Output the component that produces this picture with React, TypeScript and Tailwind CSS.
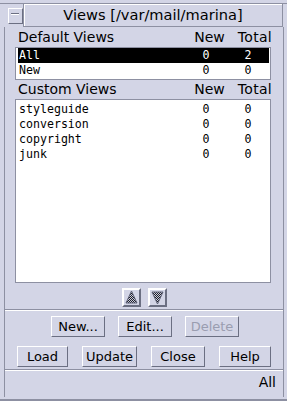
import React from 'react';

interface ViewRow {
  name: string;
  unread: number;
  total: number;
}

const defaultViews: ViewRow[] = [
  { name: 'All', unread: 0, total: 2 },
  { name: 'New', unread: 0, total: 0 },
];

const customViews: ViewRow[] = [
  { name: 'styleguide', unread: 0, total: 0 },
  { name: 'conversion', unread: 0, total: 0 },
  { name: 'copyright', unread: 0, total: 0 },
  { name: 'junk', unread: 0, total: 0 },
];

const raised = 'border border-t-white border-l-white border-r-[#6b6f82] border-b-[#6b6f82]';

const ListRow: React.FC<{ row: ViewRow; selected?: boolean }> = ({ row, selected }) => (
  <div
    className={`flex h-[15px] items-center pl-[1px] pr-[11px] leading-[15px] ${
      selected ? 'bg-black text-white' : 'text-black'
    }`}
  >
    <span className="flex-1">{row.name}</span>
    <span className="w-[20px] text-center">{row.unread}</span>
    <span className="ml-[22px] w-[20px] text-center">{row.total}</span>
  </div>
);

const SectionHeader: React.FC<{ title: string; className: string }> = ({ title, className }) => (
  <div className={`flex pl-[13px] pr-[11px] text-[14px] leading-[16px] text-black ${className}`}>
    <span className="flex-1">{title}</span>
    <span>New</span>
    <span className="ml-[13px] tracking-[0.3px]">Total</span>
  </div>
);

const Separator = () => <div className="h-[2px] border-t border-t-[#8d90a2] border-b border-b-white" />;

const Button: React.FC<{ label: string; width: string; disabled?: boolean }> = ({ label, width, disabled }) => (
  <div
    className={`${raised} ${width} flex h-[21px] items-center justify-center text-[13px] leading-[15px] ${
      disabled ? 'text-[#9a9db0]' : 'text-black'
    }`}
  >
    {label}
  </div>
);

const Arrow: React.FC<{ up?: boolean; id: string }> = ({ up, id }) => (
  <div className={`${raised} border-2 flex h-[19px] w-[19px] items-center justify-center`}>
    <svg width="15" height="15" viewBox="0 0 15 15">
      <defs>
        <pattern id={id} width="2" height="2" patternUnits="userSpaceOnUse">
          <rect width="2" height="2" fill="#c9cbdc" />
          <rect width="1" height="1" fill="#1c1d26" />
          <rect x="1" y="1" width="1" height="1" fill="#1c1d26" />
        </pattern>
      </defs>
      <polygon
        points={up ? '7.5,1 2,13 13,13' : '2,2 13,2 7.5,14'}
        fill={`url(#${id})`}
        stroke="#5f6378"
        strokeWidth="1"
      />
    </svg>
  </div>
);

export default function App() {
  return (
    <div className="flex h-[401px] w-[287px] flex-col bg-[#d3d5e6] pt-[3px] font-['DejaVu_Sans',sans-serif]">
      {/* title bar */}
      <div className="flex h-[24px] border-t border-[#8d90a2] pl-[8px]">
        <div className={`${raised} mt-[4px] flex h-[16px] w-[15px] flex-col pl-[2px] pt-[4px]`}>
          <div className="h-[2px] w-[8px] border-t border-t-[#6b6f82] border-b border-b-white" />
        </div>
        <div className="flex h-[23px] w-[260px] items-center justify-center border-x border-b border-[#8d90a2] text-[14.6px] leading-[16px] text-black shadow-[inset_1px_1px_0_#fff]">
          Views [/var/mail/marina]
        </div>
      </div>

      {/* window body */}
      <div className="ml-[4px] flex h-[370px] w-[280px] flex-col border-x border-[#8d90a2]">
        <SectionHeader title="Default Views" className="h-[20px] pt-[2px]" />
        <div className="ml-[10px] mr-[12px] h-[33px] border border-[#8d90a2] bg-white pl-[2px] pr-[1px] font-['DejaVu_Sans_Mono',monospace] text-[11.6px]">
          {defaultViews.map((v, i) => (
            <ListRow key={v.name} row={v} selected={i === 0} />
          ))}
        </div>

        <SectionHeader title="Custom Views" className="h-[19px] pt-[1px]" />
        <div className="ml-[10px] mr-[12px] h-[184px] border border-[#8d90a2] bg-white pl-[2px] pr-[1px] pt-[2px] font-['DejaVu_Sans_Mono',monospace] text-[11.6px]">
          {customViews.map((v) => (
            <ListRow key={v.name} row={v} />
          ))}
        </div>

        <div className="mt-[5px] flex justify-center gap-[7px] pl-[1px]">
          <Arrow up id="chk-up" />
          <Arrow id="chk-down" />
        </div>

        <div className="mt-[2px]">
          <Separator />
        </div>

        <div className="mt-[5px] flex gap-[13px] pl-[46px]">
          <Button label="New..." width="w-[54px]" />
          <Button label="Edit..." width="w-[54px]" />
          <Button label="Delete" width="w-[54px]" disabled />
        </div>

        <div className="mt-[9px] flex gap-[14px] pl-[12px]">
          <Button label="Load" width="w-[51px]" />
          <Button label="Update" width="w-[55px]" />
          <Button label="Close" width="w-[54px]" />
          <Button label="Help" width="w-[52px]" />
        </div>

        <div className="mt-[2px]">
          <Separator />
        </div>

        <div className="flex-1 pr-[7px] pt-[3px] text-right text-[14px] leading-[16px] text-black">All</div>
      </div>

      <div className="h-[4px] border-b-2 border-[#8d90a2]" />
    </div>
  );
}
